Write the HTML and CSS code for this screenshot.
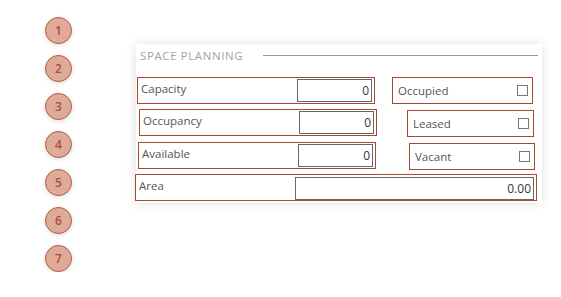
FILE: index.html
```html
<!DOCTYPE html>
<html lang="en">
<head>
    <meta charset="UTF-8">
    <meta name="viewport" content="width=device-width, initial-scale=1.0">
    <title>Space Planning</title>
    <link rel="stylesheet" href="styles.css">
</head>
<body>
    <div class="steps">
        <div class="step">1</div>
        <div class="step">2</div>
        <div class="step">3</div>
        <div class="step">4</div>
        <div class="step">5</div>
        <div class="step">6</div>
        <div class="step">7</div>
    </div>

    <div class="card">
        <div class="section-title">
            <span>SPACE PLANNING</span>
            <div class="rule"></div>
        </div>

        <div class="row row-1">
            <div class="field field-num">
                <label>Capacity</label>
                <input type="text" value="0">
            </div>
            <div class="field field-check">
                <label>Occupied</label>
                <span class="checkbox"></span>
            </div>
        </div>

        <div class="row row-2">
            <div class="field field-num">
                <label>Occupancy</label>
                <input type="text" value="0">
            </div>
            <div class="field field-check">
                <label>Leased</label>
                <span class="checkbox"></span>
            </div>
        </div>

        <div class="row row-3">
            <div class="field field-num">
                <label>Available</label>
                <input type="text" value="0">
            </div>
            <div class="field field-check">
                <label>Vacant</label>
                <span class="checkbox"></span>
            </div>
        </div>

        <div class="row row-4">
            <div class="field field-wide">
                <label>Area</label>
                <input type="text" value="0.00">
            </div>
        </div>
    </div>
</body>
</html>
```

FILE: styles.css
```css
body {
    margin: 0;
    font-family: "Open Sans", "Noto Sans", sans-serif;
    background-color: #ffffff;
    display: flex;
    align-items: flex-start;
}

/* numbered markers on the left */
.steps {
    display: flex;
    flex-direction: column;
    gap: 11px;
    margin-left: 45px;
    padding-top: 17px;
}

.step {
    width: 25px;
    height: 25px;
    border: 1px solid #b35a40;
    border-radius: 50%;
    background-color: #e0aa99;
    color: #a8503a;
    font-family: "Open Sans", sans-serif;
    font-size: 12px;
    font-weight: 600;
    display: flex;
    align-items: center;
    justify-content: center;
    box-shadow: 0 1px 4px rgba(0, 0, 0, 0.15);
}

/* card */
.card {
    width: 406px;
    height: 159px;
    margin-left: 64px;
    margin-top: 44px;
    background-color: white;
    box-shadow: 0 0 10px rgba(0, 0, 0, 0.13);
    box-sizing: border-box;
}

.section-title {
    display: flex;
    align-items: center;
    height: 22px;
    padding-left: 4px;
    padding-right: 4px;
    color: #a3a3a3;
    font-size: 11.5px;
    letter-spacing: 0.6px;
}

.section-title .rule {
    flex: 1;
    height: 1px;
    background-color: #999;
    margin-left: 20px;
}

.row {
    display: flex;
    justify-content: space-between;
    align-items: flex-start;
}

.field {
    display: flex;
    align-items: flex-start;
    justify-content: space-between;
    height: 27px;
    border: 1px solid #a54a2e;
    box-sizing: border-box;
    font-size: 11.5px;
    color: #555;
}

.field label {
    padding-left: 3px;
    padding-top: 3px;
    line-height: 16px;
}

.field input {
    height: 23px;
    box-sizing: border-box;
    margin: 1px 2px 0 0;
    border: 1px solid #666;
    text-align: right;
    font-family: inherit;
    font-size: 12px;
    color: #333;
    padding: 0 2px;
    outline: none;
}

.field-num {
    width: 238px;
}

.field-num input {
    width: 75px;
}

.field-check {
    align-items: center;
}

.field-check label {
    padding-top: 0;
    padding-left: 5px;
}

.checkbox {
    width: 11px;
    height: 11px;
    border: 1px solid #777;
    box-sizing: border-box;
    margin-right: 4px;
}

.field-wide {
    width: 402px;
}

.field-wide input {
    width: 239px;
    margin-top: 2px;
}

/* per-row offsets */
.row-1 {
    margin-top: 11px;
    padding-left: 1px;
    padding-right: 9px;
}

.row-1 .field-num {
    width: 238px;
}

.row-1 .field-check {
    width: 141px;
}

.row-2 {
    margin-top: 5px;
    padding-left: 3px;
    padding-right: 8px;
}

.row-2 .field-check {
    width: 127px;
    margin-top: 1px;
}

.row-3 {
    margin-top: 5px;
    padding-left: 2px;
    padding-right: 7px;
}

.row-3 .field-check {
    width: 126px;
    margin-top: 1px;
}

.row-4 {
    margin-top: 4px;
    margin-left: -1px;
}
```
